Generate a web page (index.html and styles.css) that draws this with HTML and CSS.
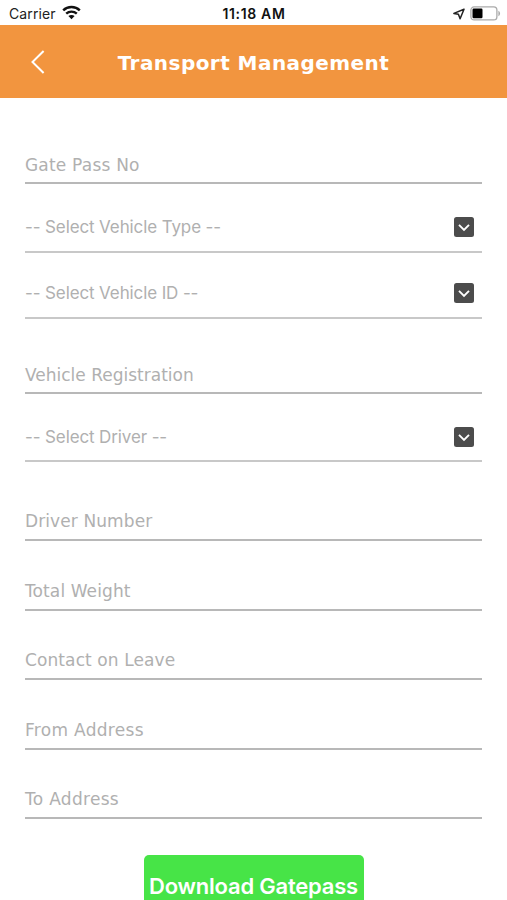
FILE: index.html
```html
<!DOCTYPE html>
<html lang="en">
<head>
<meta charset="utf-8">
<title>Transport Management</title>
<link rel="stylesheet" href="styles.css">
</head>
<body>
<div class="status">
  <div class="status-left"><span class="carrier">Carrier</span>
    <svg class="wifi" width="19" height="15" viewBox="0 0 19 15" fill="none" stroke="#111" stroke-width="2.4"><path d="M1.2 5.3C5.7.9 13.3.9 17.8 5.3M4.2 8.7c3-2.8 7.6-2.8 10.6 0"/><path d="M9.5 14.2 6.4 11.1c1.8-1.6 4.4-1.6 6.2 0z" fill="#111" stroke="none"/></svg>
  </div>
  <span class="clock">11:18 AM</span>
  <div class="status-right">
    <svg width="12" height="12" viewBox="0 0 12 12" fill="none" stroke="#222" stroke-width="1.5" stroke-linejoin="round"><path d="M11 1.2.9 5.4l4.5.9 1.7 4.4z"/></svg>
    <svg width="31" height="15" viewBox="0 0 31 15"><rect x=".9" y=".9" width="26" height="13" rx="3.2" fill="#fff" stroke="#aaa" stroke-width="1.3"/><rect x="2.5" y="2.6" width="10" height="9.7" rx="1.2"/><path d="M28.4 4.8c2.2 1 2.2 4.4 0 5.4z" fill="#aaa"/></svg>
  </div>
</div>
<header class="header">
  <svg class="back" width="14" height="24" viewBox="0 0 14 24" fill="none" stroke="#fff" stroke-width="2"><path d="M12.6 1 1.5 12l11.1 11"/></svg>
  <h1 class="title">Transport Management</h1>
</header>
<main class="form">
  <div class="field first"><span>Gate Pass No</span></div>
  <div class="field select type"><span>-- Select Vehicle Type --</span><svg class="drop" viewBox="0 0 20 20"><rect width="20" height="20" rx="2.5" fill="#4c4c4c"/><path d="m5 7.8 5 5 5-5" fill="none" stroke="#fff" stroke-width="1.9"/></svg></div>
  <div class="field select id"><span>-- Select Vehicle ID --</span><svg class="drop" viewBox="0 0 20 20"><rect width="20" height="20" rx="2.5" fill="#4c4c4c"/><path d="m5 7.8 5 5 5-5" fill="none" stroke="#fff" stroke-width="1.9"/></svg></div>
  <div class="field registration"><span>Vehicle Registration</span></div>
  <div class="field select driver"><span>-- Select Driver --</span><svg class="drop" viewBox="0 0 20 20"><rect width="20" height="20" rx="2.5" fill="#4c4c4c"/><path d="m5 7.8 5 5 5-5" fill="none" stroke="#fff" stroke-width="1.9"/></svg></div>
  <div class="field number"><span>Driver Number</span></div>
  <div class="field"><span>Total Weight</span></div>
  <div class="field"><span>Contact on Leave</span></div>
  <div class="field address"><span>From Address</span></div>
  <div class="field address"><span>To Address</span></div>
  <button class="download">Download Gatepass</button>
</main>
</body>
</html>
```
FILE: styles.css
```css
* { box-sizing: border-box; }
body {
  margin: 0;
  height: 900px;
  overflow: hidden;
  background: #fff;
  font-family: Inter, sans-serif;
}
.status {
  height: 25px;
  display: grid;
  grid-template-columns: 1fr auto 1fr;
  align-items: center;
  padding: 2px 6px 0 9px;
  font-size: 14px;
  line-height: 20px;
  color: #222;
}
.status-left { display: flex; align-items: center; gap: 6px; }
.carrier { letter-spacing: .1px; }
.wifi { margin-top: -2px; }
.clock { font-weight: 600; color: #111; letter-spacing: .65px; margin: 0 1px 0 -1px; }
.status-right { display: flex; align-items: center; justify-content: flex-end; gap: 5px; }
.header {
  height: 73px;
  display: grid;
  grid-template-columns: 60px 1fr 60px;
  align-items: center;
  background: #f2953f;
  color: #fff;
}
.back { margin-left: 31px; }
.title {
  margin: 2px 0 0;
  text-align: center;
  white-space: nowrap;
  font: 700 20px/26px "DejaVu Sans", sans-serif;
  letter-spacing: .45px;
}
.form { padding: 0 25px; display: flex; flex-direction: column; }
.field {
  height: 69.6px;
  flex: none;
  display: flex;
  align-items: flex-end;
  justify-content: space-between;
  padding-bottom: 8px;
  border-bottom: 2px solid #b8b8b8;
  color: #b0b0b0;
  font: 17px/20px "DejaVu Sans", sans-serif;
  letter-spacing: .1px;
}
.select {
  padding-bottom: 14px;
  border-bottom-color: #c8c8c8;
  font: 17px/20px Inter, sans-serif;
  letter-spacing: -.12px;
}
.first { height: 86px; padding-bottom: 7px; letter-spacing: .2px; }
.type { height: 69px; }
.id { height: 66px; }
.registration { height: 75px; padding-bottom: 7px; letter-spacing: 0; }
.driver { height: 68px; padding-bottom: 13px; }
.number { height: 79px; }
.address { letter-spacing: .3px; }
.drop { width: 20px; height: 20px; margin-right: 8px; }
.download {
  align-self: center;
  width: 220px;
  height: 62px;
  flex: none;
  margin-top: 36px;
  padding: 0;
  border: 0;
  border-radius: 5px;
  background: #47e447;
  color: #fff;
  white-space: nowrap;
  font: 600 22px/28px Inter, sans-serif;
  letter-spacing: -.22px;
}
```
